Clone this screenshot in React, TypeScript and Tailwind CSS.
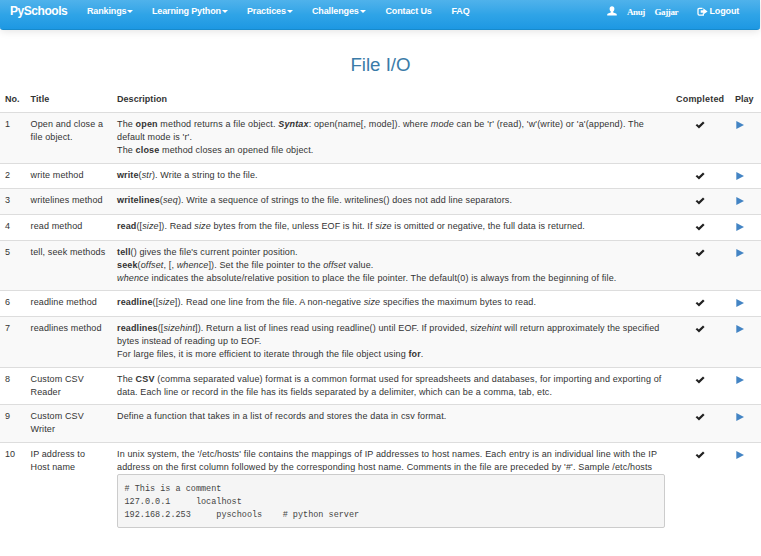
import type { ReactNode } from "react";

type Line = { text: ReactNode; fit?: string };
type Row = { no: string; title: Line[]; lines: Line[]; height: string; code?: boolean };

const rows: Row[] = [
  {
    no: "1",
    height: "h-[51px]",
    title: [{ text: "Open and close a" }, { text: "file object." }],
    lines: [
      { fit: "tracking-[0.146px]", text: <>The <b>open</b> method returns a file object. <b><i>Syntax</i></b>: open(name[, mode]). where <i>mode</i> can be 'r' (read), 'w'(write) or 'a'(append). The</> },
      { text: "default mode is 'r'." },
      { fit: "tracking-[0.15px]", text: <>The <b>close</b> method closes an opened file object.</> },
    ],
  },
  {
    no: "2",
    height: "h-[25px]",
    title: [{ text: "write method" }],
    lines: [{ fit: "tracking-[0.11px]", text: <><b>write</b>(<i>str</i>). Write a string to the file.</> }],
  },
  {
    no: "3",
    height: "h-[26px]",
    title: [{ text: "writelines method" }],
    lines: [{ text: <><b>writelines</b>(<i>seq</i>). Write a sequence of strings to the file. writelines() does not add line separators.</> }],
  },
  {
    no: "4",
    height: "h-[26px]",
    title: [{ text: "read method" }],
    lines: [{ fit: "tracking-[0.12px]", text: <><b>read</b>([<i>size</i>]). Read <i>size</i> bytes from the file, unless EOF is hit. If <i>size</i> is omitted or negative, the full data is returned.</> }],
  },
  {
    no: "5",
    height: "h-[50px]",
    title: [{ text: "tell, seek methods" }],
    lines: [
      { text: <><b>tell</b>() gives the file's current pointer position.</> },
      { text: <><b>seek</b>(<i>offset</i>, [, <i>whence</i>]). Set the file pointer to the <i>offset</i> value.</> },
      { fit: "tracking-[0.14px]", text: <><i>whence</i> indicates the absolute/relative position to place the file pointer. The default(0) is always from the beginning of file.</> },
    ],
  },
  {
    no: "6",
    height: "h-[26px]",
    title: [{ text: "readline method" }],
    lines: [{ text: <><b>readline</b>([<i>size</i>]). Read one line from the file. A non-negative <i>size</i> specifies the maximum bytes to read.</> }],
  },
  {
    no: "7",
    height: "h-[51px]",
    title: [{ text: "readlines method" }],
    lines: [
      { text: <><b>readlines</b>([<i>sizehint</i>]). Return a list of lines read using readline() until EOF. If provided, <i>sizehint</i> will return approximately the specified</> },
      { fit: "tracking-[0.11px]", text: "bytes instead of reading up to EOF." },
      { fit: "tracking-[0.12px]", text: <>For large files, it is more efficient to iterate through the file object using <b>for</b>.</> },
    ],
  },
  {
    no: "8",
    height: "h-[37px]",
    title: [{ text: "Custom CSV" }, { text: "Reader" }],
    lines: [
      { fit: "tracking-[0.15px]", text: <>The <b>CSV</b> (comma separated value) format is a common format used for spreadsheets and databases, for importing and exporting of</> },
      { text: "data. Each line or record in the file has its fields separated by a delimiter, which can be a comma, tab, etc." },
    ],
  },
  {
    no: "9",
    height: "h-[38px]",
    title: [{ text: "Custom CSV" }, { text: "Writer" }],
    lines: [{ fit: "tracking-[0.14px]", text: "Define a function that takes in a list of records and stores the data in csv format." }],
  },
  {
    no: "10",
    height: "h-[92px]",
    title: [{ text: "IP address to" }, { text: "Host name" }],
    lines: [
      { fit: "tracking-[0.145px]", text: "In unix system, the '/etc/hosts' file contains the mappings of IP addresses to host names. Each entry is an individual line with the IP" },
      { fit: "tracking-[0.145px]", text: "address on the first column followed by the corresponding host name. Comments in the file are preceded by '#'. Sample /etc/hosts" },
    ],
    code: true,
  },
];

function TextLine({ line }: { line: Line }) {
  return (
    <div className="h-[12.9px]">
      <span className={`whitespace-pre ${line.fit ?? "tracking-[0.13px]"}`}>{line.text}</span>
    </div>
  );
}

function Check() {
  return (
    <svg viewBox="0 0 10 8" className="ml-[30px] mt-[1.5px] h-[8px] w-[10px] fill-[#222]">
      <path d="M0.6 4.3 2.1 2.9 3.8 4.5 8 0.5 9.6 1.9 4 7.6Z" />
    </svg>
  );
}

function Caret() {
  return <span className="ml-px h-0 w-0 border-x-[3px] border-t-[3px] border-x-transparent border-t-white" />;
}

function NavItem({ label, width, caret }: { label: string; width: string; caret?: boolean }) {
  return (
    <a className={`flex items-center whitespace-nowrap tracking-[-0.14px] ${width}`}>
      {label}
      {caret && <Caret />}
    </a>
  );
}

export default function App() {
  return (
    <div className="h-[556px] w-[761px] overflow-hidden bg-white font-['Liberation_Sans',Arial,sans-serif] text-[9px] leading-[12.9px] text-[#333]">
      <nav className="flex h-[30px] w-[760px] rounded-b-[3px] border-b border-[#178acc] bg-linear-to-b from-[#4fb2eb] via-[#2fa4e7] to-[#1d98e3] pb-[7px] font-bold text-white shadow-[0_1px_8px_rgba(0,0,0,0.12)]">
        <a className="flex w-[87px] items-center pl-[10px] text-[12px] tracking-[-0.45px]">PySchools</a>
        <NavItem label="Rankings" width="w-[65px]" caret />
        <NavItem label="Learning Python" width="w-[95px]" caret />
        <NavItem label="Practices" width="w-[65px]" caret />
        <NavItem label="Challenges" width="w-[73.5px]" caret />
        <NavItem label="Contact Us" width="w-[66px]" />
        <NavItem label="FAQ" width="w-[155.5px]" />
        <a className="flex w-[90px] items-center">
          <svg viewBox="0 0 10 10" className="h-[10px] w-[10px] fill-white">
            <path d="M5 0.3C3.5 0.3 2.6 1.3 2.6 2.8 2.6 4 3.1 5 3.8 5.6V6.6L1 7.6C0.5 7.8 0.2 8.3 0.2 9.4H9.8C9.8 8.3 9.5 7.8 9 7.6L6.2 6.6V5.6C6.9 5 7.4 4 7.4 2.8 7.4 1.3 6.5 0.3 5 0.3Z" />
          </svg>
          <span className="ml-[10px] w-[27.5px] pt-[2px] font-['Liberation_Serif',serif] tracking-[-0.4px]">Anuj</span>
          <span className="pt-[2px] font-['Liberation_Serif',serif] tracking-[-0.4px]">Gajjar</span>
        </a>
        <a className="flex items-center pt-px tracking-[-0.14px]">
          <svg viewBox="0 0 11 10" className="h-[10px] w-[11px] fill-none stroke-white">
            <path d="M5.5 1.4H2.3Q1 1.4 1 2.7V6.8Q1 8.1 2.3 8.1H6.3V6.6" strokeWidth="1.3" />
            <path d="M6.3 1.2 10.6 4.4 6.3 7.5V5.7H3.7V3.2H6.3Z" className="fill-white stroke-none" />
          </svg>
          <span className="ml-[1.5px]">Logout</span>
        </a>
      </nav>

      <h1 className="h-[57px] pt-[24px] text-center text-[18.7px] leading-[22px] text-[#3a7ba8]">File I/O</h1>

      <header className="flex h-[26px] border-b border-[#ddd] pt-[6px] pl-[5px] font-bold">
        <span className="w-[25.5px]">No.</span>
        <span className="w-[86.5px] tracking-[0.1px]">Title</span>
        <span className="w-[559px] tracking-[0.05px]">Description</span>
        <span className="w-[59px] tracking-[0.2px]">Completed</span>
        <span>Play</span>
      </header>

      {rows.map((row, i) => (
        <section
          key={row.no}
          className={`flex pt-[5px] pl-[5px] ${row.height} ${i < 9 ? "border-b border-[#ddd]" : ""} ${i % 2 === 0 && i < 9 ? "bg-[#f9f9f9]" : ""}`}
        >
          <div className="w-[25.5px] shrink-0">{row.no}</div>
          <div className="w-[86.5px] shrink-0">
            {row.title.map((line, n) => <TextLine key={n} line={line} />)}
          </div>
          <div className="w-[548px] shrink-0">
            {row.lines.map((line, n) => <TextLine key={n} line={line} />)}
            {row.code && (
              <pre className="h-[54px] rounded-[2px] border border-[#ccc] bg-[#f5f5f5] pt-[8.5px] pl-[6.5px] font-['Liberation_Mono',monospace] text-[8.5px] leading-[13px] text-[#444]">
                {"# This is a comment\n127.0.0.1     localhost\n192.168.2.253     pyschools    # python server"}
              </pre>
            )}
          </div>
          <div className="w-[71px] shrink-0 pt-[1.5px]"><Check /></div>
          <svg viewBox="0 0 8 8" className="mt-[3px] h-[8px] w-[8px] shrink-0 fill-[#4384c4]">
            <path d="M0.3 0 8 4 0.3 8Z" />
          </svg>
        </section>
      ))}
    </div>
  );
}
